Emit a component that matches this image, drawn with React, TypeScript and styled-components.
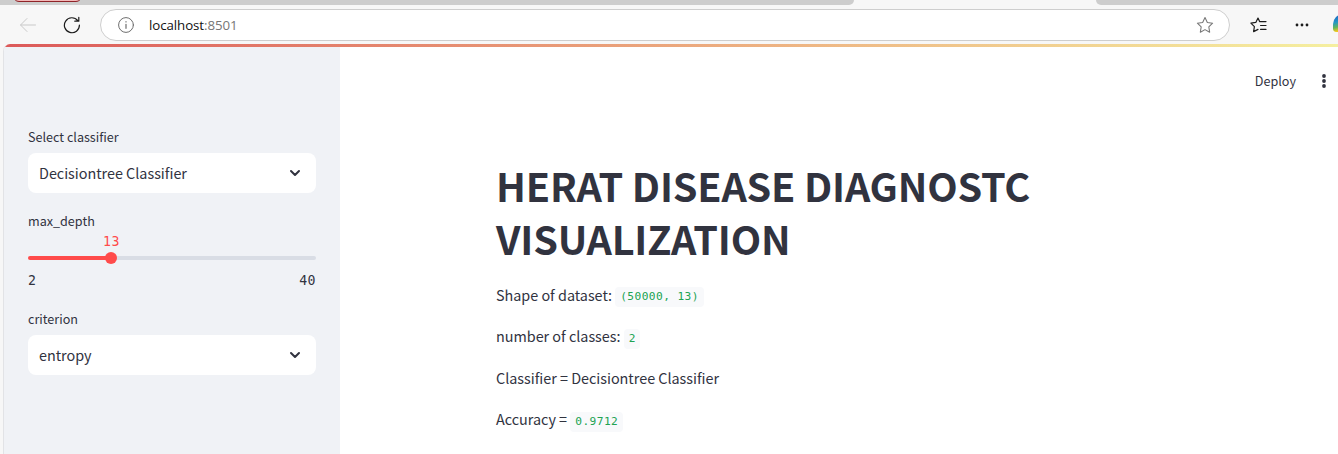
import React from "react";
import styled, { createGlobalStyle } from "styled-components";

const sans = `"Noto Sans CJK SC", "Noto Sans", sans-serif`;
const mono = `"DejaVu Sans Mono", monospace`;

const GlobalStyle = createGlobalStyle`
  * { box-sizing: border-box; }
  body { margin: 0; background: #f7f7f7; overflow: hidden; }
`;

const Window = styled.div`
  width: 1338px;
  height: 454px;
  display: flex;
  flex-direction: column;
  overflow: hidden;
  background: #f7f7f7;
  color: #31333f;
  font-family: ${sans};
`;

const TabStrip = styled.div`
  flex: none;
  height: 5px;
  display: flex;
  background: #f7f7f7;
`;

const TabSpan = styled.div<{ $width?: number; $side: "left" | "right" }>`
  ${(p) => (p.$width ? `width: ${p.$width}px;` : "flex: 1;")}
  background: #cdcdcd;
  overflow: hidden;
  padding-left: ${(p) => (p.$side === "left" ? 13 : 0)}px;
  border-radius: ${(p) => (p.$side === "left" ? "0 0 6px 0" : "0 0 0 6px")};
`;

const TabGap = styled.div`
  width: 242px;
`;

const GroupPill = styled.div`
  width: 69px;
  height: 14px;
  margin-top: -12px;
  border: 1.5px solid #8f2328;
  border-radius: 6px;
  background: #f3b9b9;
`;

const Toolbar = styled.div`
  flex: none;
  height: 39px;
  display: flex;
  align-items: center;
  padding-top: 1px;
`;

const ToolIcon = styled.svg<{ $left?: number }>`
  display: block;
  flex: none;
  margin-left: ${(p) => p.$left ?? 0}px;
  fill: none;
  stroke-linecap: round;
  stroke-linejoin: round;
`;

const AddressBar = styled.div`
  flex: none;
  width: 1130px;
  height: 32px;
  margin-left: 19px;
  padding: 0 15px 0 17px;
  display: flex;
  align-items: center;
  border: 1px solid #cecece;
  border-radius: 16px;
  background: #fff;
`;

const Url = styled.span`
  flex: 1;
  margin-left: 15px;
  font: 13.3px/20px "Open Sans", sans-serif;
  letter-spacing: -0.08px;
  color: #111;
`;

const Port = styled.span`
  color: #767676;
`;

const CopilotDot = styled.div`
  flex: none;
  width: 18px;
  height: 18px;
  margin: 0 0 4px 24px;
  border-radius: 12px 9px 9px 4px;
  background: linear-gradient(165deg, #1b6fc4 15%, #2497c4 40%, #62b55c 62%, #f0c81e 80%);
`;

const Page = styled.div`
  flex: 1;
  margin-left: 3px;
  display: flex;
  flex-direction: column;
  border-left: 1px solid #e2e3e6;
  border-top-left-radius: 7px;
  overflow: hidden;
  background: #fff;
`;

const Decoration = styled.div`
  flex: none;
  height: 3px;
  background: linear-gradient(90deg, #dc5a5a, #eeb684 60%, #f5efa0);
`;

const Columns = styled.div`
  flex: 1;
  display: flex;
`;

const Sidebar = styled.aside`
  width: 336px;
  padding: 79px 24px 0;
  background: #f0f2f6;
`;

const Label = styled.div`
  height: 21px;
  font-size: 12.6px;
  line-height: 21px;
`;

const Select = styled.div`
  height: 40px;
  margin: 6px 0 17px;
  padding: 0 15px 0 11px;
  display: flex;
  align-items: center;
  justify-content: space-between;
  border-radius: 8px;
  background: #fff;
  font-size: 14.4px;
  line-height: 24px;
  letter-spacing: -0.02px;
`;

const Slider = styled.div`
  height: 77px;
  padding-top: 1px;
  font: 13.2px/16px ${mono};
  letter-spacing: 0.45px;
`;

const ThumbRow = styled.div`
  display: flex;
  height: 24px;
`;

const ThumbColumn = styled.div`
  width: 167px;
  text-align: center;
  color: #ff4b4b;
  padding-top: 2px;
`;

const Track = styled.div<{ $percent: number }>`
  height: 4px;
  display: flex;
  align-items: center;
  border-radius: 4px;
  background: linear-gradient(90deg, #ff4b4b ${(p) => p.$percent}%, #d9dde5 ${(p) => p.$percent}%);
`;

const Thumb = styled.div<{ $percent: number }>`
  width: 12px;
  height: 12px;
  margin-left: calc(${(p) => p.$percent}% - 6px);
  border-radius: 50%;
  background: #ff4b4b;
`;

const Range = styled.div`
  display: flex;
  justify-content: space-between;
  margin-top: 13px;
`;

const Main = styled.main`
  flex: 1;
  display: flex;
  flex-direction: column;
`;

const Header = styled.header`
  height: 68px;
  display: flex;
  align-items: center;
  justify-content: flex-end;
  padding-right: 12px;
  font-size: 12.6px;
`;

const HeaderLabel = styled.span`
  line-height: 20px;
`;

const Content = styled.div`
  padding: 44px 0 0 156px;
`;

const Title = styled.h1`
  margin: 0 0 17px;
  font-size: 39.6px;
  line-height: 52.8px;
  font-weight: 700;
  letter-spacing: -0.2px;
`;

const Line = styled.p`
  margin: 0 0 16px;
  font-size: 14.4px;
  line-height: 25.5px;
  height: 25.5px;
  white-space: nowrap;
  letter-spacing: -0.02px;
`;

const Code = styled.code`
  display: inline-block;
  padding: 0 4.6px 0 5px;
  border-radius: 4px;
  background: #f8f9fb;
  color: #21a352;
  font: 11.2px/20px ${mono};
  letter-spacing: 0.42px;
  vertical-align: 0.5px;
  white-space: pre;
`;

const Chevron = () => (
  <ToolIcon width="12" height="8" viewBox="0 0 12 8" stroke="#31333f" strokeWidth="2">
    <path d="M2 2 L6 6 L10 2" />
  </ToolIcon>
);

const star = "M8 1 L10.2 5.6 L15.2 6.3 L11.6 9.8 L12.4 14.8 L8 12.4 L3.6 14.8 L4.4 9.8 L0.8 6.3 L5.8 5.6 Z";

export default function App() {
  return (
    <Window>
      <GlobalStyle />
      <TabStrip>
        <TabSpan $side="left" $width={854}>
          <GroupPill />
        </TabSpan>
        <TabGap />
        <TabSpan $side="right" />
      </TabStrip>
      <Toolbar>
        <ToolIcon $left={20} width="16" height="16" viewBox="0 0 16 16" stroke="#c9c9c9">
          <path d="M15.5 8 H0.8 M7 1.5 L0.5 8 L7 14.5" />
        </ToolIcon>
        <ToolIcon $left={27} width="18" height="18" viewBox="0 0 18 18" stroke="#1c1c1c" strokeWidth="1.2">
          <path d="M16.4 9 A7.5 7.5 0 1 1 14.8 4.6 M15.8 1.3 V5.2 H11.8" />
        </ToolIcon>
        <AddressBar>
          <ToolIcon width="16" height="16" viewBox="0 0 16 16" stroke="#6e6e6e">
            <circle cx="8" cy="8" r="7.4" />
            <path d="M8 7.3 V11.3 M8 4.7 V4.9" strokeWidth="1.2" />
          </ToolIcon>
          <Url>
            localhost<Port>:8501</Port>
          </Url>
          <ToolIcon width="18" height="18" viewBox="-0.5 -0.5 17 17" stroke="#777">
            <path d={star} />
          </ToolIcon>
        </AddressBar>
        <ToolIcon $left={20} width="17" height="17" viewBox="0 0 17 17" stroke="#1c1c1c" strokeWidth="1.2">
          <path d="M9.6 4.6 L8 1 L5.8 5.4 L0.9 6.2 L4.4 9.7 L3.6 14.6 L8 12.4 M9.6 4.6 H16 M10.6 8.5 H16 M10.6 12.4 H16" />
        </ToolIcon>
        <ToolIcon $left={28} width="14" height="4" viewBox="0 0 14 4">
          <g fill="#1c1c1c">
            <circle cx="2" cy="2" r="1.4" />
            <circle cx="7" cy="2" r="1.4" />
            <circle cx="12" cy="2" r="1.4" />
          </g>
        </ToolIcon>
        <CopilotDot />
      </Toolbar>
      <Page>
        <Decoration />
        <Columns>
          <Sidebar>
            <Label>Select classifier</Label>
            <Select>
              Decisiontree Classifier
              <Chevron />
            </Select>
            <Label>max_depth</Label>
            <Slider>
              <ThumbRow>
                <ThumbColumn>13</ThumbColumn>
              </ThumbRow>
              <Track $percent={28.95}>
                <Thumb $percent={28.95} />
              </Track>
              <Range>
                <span>2</span>
                <span>40</span>
              </Range>
            </Slider>
            <Label>criterion</Label>
            <Select>
              entropy
              <Chevron />
            </Select>
          </Sidebar>
          <Main>
            <Header>
              <HeaderLabel>Deploy</HeaderLabel>
              <ToolIcon $left={26} width="4" height="16" viewBox="0 0 4 16">
                <g fill="#31333f">
                  <circle cx="2" cy="3" r="1.9" />
                  <circle cx="2" cy="8" r="1.9" />
                  <circle cx="2" cy="13" r="1.9" />
                </g>
              </ToolIcon>
            </Header>
            <Content>
              <Title>
                HERAT DISEASE DIAGNOSTC
                <br />
                VISUALIZATION
              </Title>
              <Line>
                Shape of dataset: <Code>(50000, 13)</Code>
              </Line>
              <Line>
                number of classes: <Code>2</Code>
              </Line>
              <Line>Classifier = Decisiontree Classifier</Line>
              <Line>
                Accuracy = <Code>0.9712</Code>
              </Line>
            </Content>
          </Main>
        </Columns>
      </Page>
    </Window>
  );
}
